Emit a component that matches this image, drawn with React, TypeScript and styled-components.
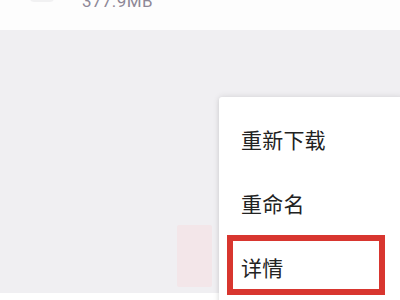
import React from "react";
import styled, { createGlobalStyle } from "styled-components";

const Global = createGlobalStyle`
  html, body { margin: 0; padding: 0; background: #ffffff; }
  body { font-family: "Noto Sans CJK SC", "Noto Sans", Roboto, sans-serif; }
`;

const Screen = styled.div`
  position: relative;
  width: 400px;
  height: 300px;
  overflow: hidden;
  display: flex;
  flex-direction: column;
  background: #ffffff;
`;

const Header = styled.div`
  height: 30px;
  flex: none;
  background: #fdfdfd;
  display: flex;
  align-items: flex-start;
  padding-left: 30px;
  gap: 28px;
  overflow: hidden;
`;

const Thumb = styled.div`
  width: 24px;
  height: 14px;
  margin-top: -12px;
  border-radius: 4px;
  background: #f1f1f2;
`;

const Size = styled.span`
  margin-top: -10px;
  font-family: Roboto, "Noto Sans", sans-serif;
  font-size: 17px;
  line-height: 22px;
  color: #8e8897;
  letter-spacing: 0.4px;
`;

const Body = styled.div`
  flex: 1;
  background: #f0eff2;
  padding: 195px 0 0 177px;
  box-sizing: border-box;
`;

const Faint = styled.div`
  width: 35px;
  height: 62px;
  background: #f3e6e9;
  border-radius: 2px;
`;

const Footer = styled.div`
  height: 7px;
  flex: none;
  background: #ffffff;
`;

const Menu = styled.div`
  position: absolute;
  left: 219px;
  top: 97px;
  right: -4px;
  bottom: -20px;
  background: #ffffff;
  border-radius: 3px;
  box-shadow: 0 0 6px rgba(0, 0, 0, 0.12), 0 2px 4px rgba(0, 0, 0, 0.06);
  padding-top: 10px;
  display: flex;
  flex-direction: column;
`;

const Item = styled.div`
  height: 64px;
  display: flex;
  align-items: center;
  padding-left: 22px;
  font-size: 21px;
  color: #222222;
  letter-spacing: 0.2px;
`;

const Highlight = styled.div`
  position: absolute;
  left: 8px;
  top: 138px;
  width: 158px;
  height: 60px;
  box-sizing: border-box;
  border: 6px solid #d8362f;
`;

export default function App() {
  return (
    <>
      <Global />
      <Screen>
        <Header>
          <Thumb />
          <Size>377.9MB</Size>
        </Header>
        <Body>
          <Faint />
        </Body>
        <Footer />
        <Menu>
          <Item>重新下载</Item>
          <Item>重命名</Item>
          <Item>详情</Item>
          <Highlight />
        </Menu>
      </Screen>
    </>
  );
}
